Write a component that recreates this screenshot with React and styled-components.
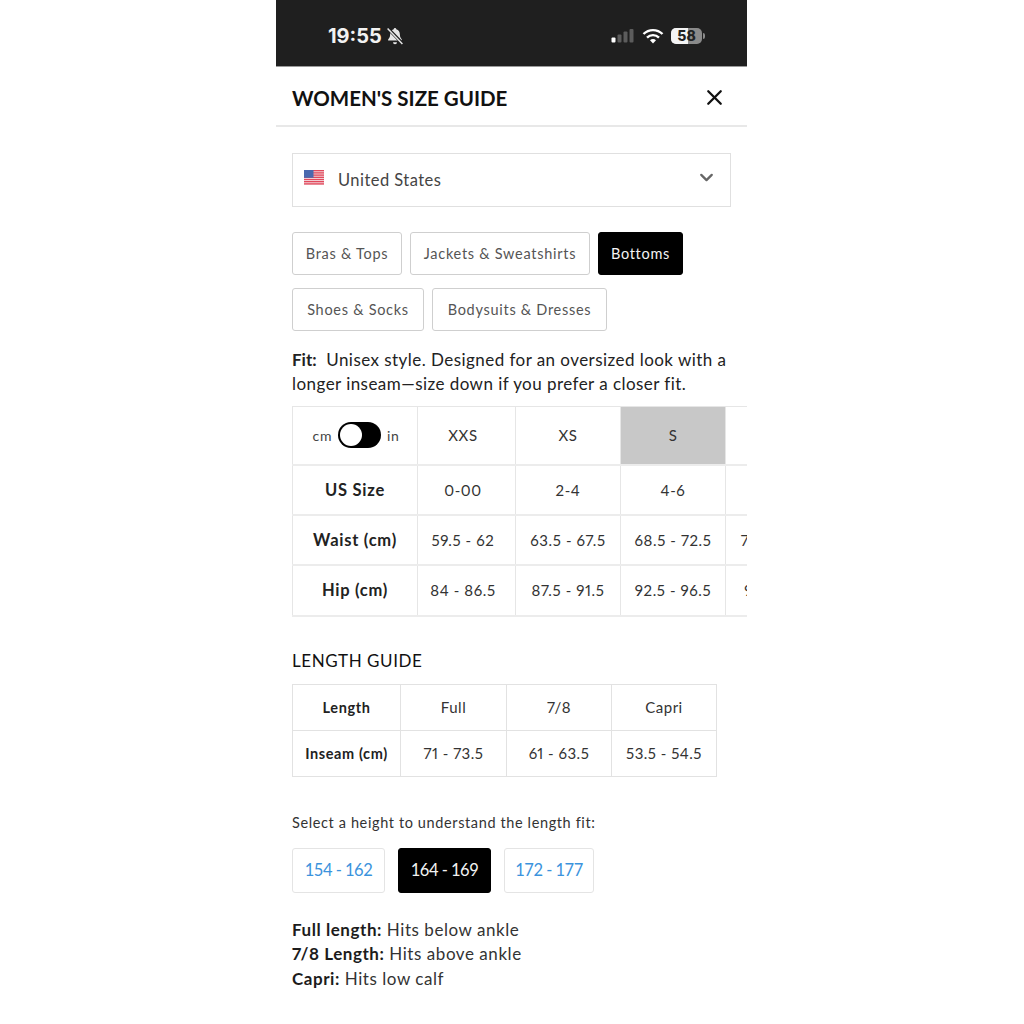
import styled, { createGlobalStyle } from "styled-components";
import { ChevronDown, X } from "lucide-react";

const GlobalStyle = createGlobalStyle`
  html, body {
    margin: 0;
    padding: 0;
    background: #fff;
  }
  body {
    font-family: "Lato", "Open Sans", sans-serif;
    font-variant-numeric: proportional-nums;
    color: #1c1c1c;
  }
`;

const categories = [
  [
    { label: "Bras & Tops", width: 110 },
    { label: "Jackets & Sweatshirts", width: 180 },
    { label: "Bottoms", width: 85, active: true },
  ],
  [
    { label: "Shoes & Socks", width: 132 },
    { label: "Bodysuits & Dresses", width: 175 },
  ],
];

const sizeRows = [
  { label: "US Size", height: 50, values: ["0-00", "2-4", "4-6", ""] },
  { label: "Waist (cm)", height: 50, values: ["59.5 - 62", "63.5 - 67.5", "68.5 - 72.5", "73.5 - 77.5"] },
  { label: "Hip (cm)", height: 51, values: ["84 - 86.5", "87.5 - 91.5", "92.5 - 96.5", "97.5 - 101"] },
];

const heights = [
  { label: "154 - 162", width: 93 },
  { label: "164 - 169", width: 93, active: true },
  { label: "172 - 177", width: 90 },
];

const StatusIcons = () => (
  <StatusRight>
    <svg width="24" height="16" viewBox="0 0 24 16">
      <rect x="0.5" y="9.5" width="4" height="5" rx="1" fill="#fff" />
      <rect x="6.5" y="6.5" width="4" height="8" rx="1" fill="#5c5c5c" />
      <rect x="12.5" y="3.5" width="4" height="11" rx="1" fill="#5c5c5c" />
      <rect x="18.5" y="1" width="4" height="13.5" rx="1" fill="#5c5c5c" />
    </svg>
    <svg width="22" height="16" viewBox="0 0 22 16" fill="none" stroke="#fff" strokeWidth="2.4">
      <path d="M1.5 6a13.5 13.5 0 0 1 19 0" />
      <path d="M5 9.6a8.6 8.6 0 0 1 12 0" />
      <path d="M11 15.5l-3-3.2a4.2 4.2 0 0 1 6 0z" fill="#fff" stroke="none" />
    </svg>
    <Battery>
      <BatteryLevel />
      <BatteryText>58</BatteryText>
      <BatteryCap />
    </Battery>
  </StatusRight>
);

const MutedBell = () => (
  <svg width="18" height="18" viewBox="0 0 17 17">
    <path d="M8.5 1a1.2 1.2 0 0 1 1.2 1.2c2.4.6 3.4 2.6 3.4 5 0 2.6 1 3.6 1.9 4.6v1H2v-1c.9-1 1.9-2 1.9-4.6 0-2.4 1-4.4 3.4-5A1.2 1.2 0 0 1 8.5 1z" fill="#e6e6e6" />
    <path d="M6.6 14.4h3.8a1.9 1.9 0 0 1-3.8 0z" fill="#e6e6e6" />
    <path d="M2 1.5l13.5 14" stroke="#1f1f1f" strokeWidth="3" />
    <path d="M1.5 1.5l14 14.5" stroke="#e6e6e6" strokeWidth="1.4" />
  </svg>
);

const UsFlag = () => (
  <svg width="20" height="15" viewBox="0 0 20 15">
    <rect width="20" height="15" rx="1" fill="#f6eef0" />
    {[0, 2.2, 4.4, 6.6, 8.8, 11, 13.2].map((y) => (
      <rect key={y} y={y} width="20" height="1.4" fill="#e2495c" />
    ))}
    <rect width="9.5" height="7.8" fill="#4a68ae" />
  </svg>
);

export default function App() {
  return (
    <>
      <GlobalStyle />
      <Phone>
        <StatusBar>
          <StatusLeft>
            <Clock>19:55</Clock>
            <MutedBell />
          </StatusLeft>
          <StatusIcons />
        </StatusBar>

        <Header>
          <Title>WOMEN'S SIZE GUIDE</Title>
          <X size={25} strokeWidth={2.2} color="#111" />
        </Header>

        <Content>
          <CountrySelect>
            <UsFlag />
            <CountryName>United States</CountryName>
            <ChevronDown size={21} strokeWidth={2.6} color="#666" />
          </CountrySelect>

          <CategoryGroup>
            {categories.map((row, i) => (
              <CategoryRow key={i}>
                {row.map((c) => (
                  <CategoryButton key={c.label} $active={c.active} $width={c.width}>
                    {c.label}
                  </CategoryButton>
                ))}
              </CategoryRow>
            ))}
          </CategoryGroup>

          <FitText>
            <strong>Fit:</strong>&nbsp; Unisex style. Designed for an oversized look with a
            longer inseam—size down if you prefer a closer fit.
          </FitText>

          <SizeTableWrap>
            <SizeTable>
              <colgroup>
                <col width="125" />
                <col width="98" />
                <col width="105" />
                <col width="105" />
                <col width="105" />
              </colgroup>
              <tbody>
                <SizeRow $height={58}>
                  <SizeCell>
                    <UnitToggle>
                      cm
                      <Toggle>
                        <Knob />
                      </Toggle>
                      in
                    </UnitToggle>
                  </SizeCell>
                  <SizeCell>XXS</SizeCell>
                  <SizeCell>XS</SizeCell>
                  <SizeCell $selected>S</SizeCell>
                  <SizeCell>M</SizeCell>
                </SizeRow>
                {sizeRows.map((row) => (
                  <SizeRow key={row.label} $height={row.height}>
                    <SizeLabel>{row.label}</SizeLabel>
                    {row.values.map((v, i) => (
                      <SizeCell key={i}>{v}</SizeCell>
                    ))}
                  </SizeRow>
                ))}
              </tbody>
            </SizeTable>
          </SizeTableWrap>

          <SectionTitle>LENGTH GUIDE</SectionTitle>

          <LengthTable>
            <colgroup>
              <col width="108" />
              <col width="106" />
              <col width="105" />
              <col width="105" />
            </colgroup>
            <tbody>
              <tr>
                <LengthLabel>Length</LengthLabel>
                <LengthCell>Full</LengthCell>
                <LengthCell>7/8</LengthCell>
                <LengthCell>Capri</LengthCell>
              </tr>
              <tr>
                <LengthLabel>Inseam (cm)</LengthLabel>
                <LengthCell>71 - 73.5</LengthCell>
                <LengthCell>61 - 63.5</LengthCell>
                <LengthCell>53.5 - 54.5</LengthCell>
              </tr>
            </tbody>
          </LengthTable>

          <HeightPrompt>Select a height to understand the length fit:</HeightPrompt>

          <HeightRow>
            {heights.map((h) => (
              <HeightButton key={h.label} $active={h.active} $width={h.width}>
                {h.label}
              </HeightButton>
            ))}
          </HeightRow>

          <FitList>
            <FitLine><strong>Full length:</strong> Hits below ankle</FitLine>
            <FitLine><strong>7/8 Length:</strong> Hits above ankle</FitLine>
            <FitLine><strong>Capri:</strong> Hits low calf</FitLine>
          </FitList>
        </Content>
      </Phone>
    </>
  );
}

const Phone = styled.main`
  width: 471px;
  margin-left: 276px;
  background: #fff;
`;

const StatusBar = styled.div`
  height: 67px;
  background: #1f1f1f;
  border-bottom: 1px solid #9a9a9a;
  box-sizing: border-box;
  display: flex;
  align-items: center;
  justify-content: space-between;
  padding: 5px 45px 0 52px;
`;

const StatusLeft = styled.div`
  display: flex;
  align-items: center;
  gap: 4px;
`;

const Clock = styled.span`
  font-family: "Inter", sans-serif;
  font-size: 20px;
  font-weight: 700;
  color: #f2f2f2;
`;

const StatusRight = styled.div`
  display: flex;
  align-items: center;
  gap: 7px;
`;

const Battery = styled.div`
  position: relative;
  width: 31px;
  height: 16px;
  border-radius: 5px;
  background: #8a8a8a;
  display: flex;
  align-items: center;
  justify-content: center;
`;

const BatteryLevel = styled.div`
  position: absolute;
  inset: 0 14px 0 0;
  background: #f4f4f4;
  border-radius: 5px 0 0 5px;
`;

const BatteryText = styled.span`
  position: relative;
  font-family: "Inter", sans-serif;
  font-size: 14px;
  font-weight: 800;
  color: #222;
`;

const BatteryCap = styled.div`
  position: absolute;
  right: -3px;
  top: 5px;
  width: 2px;
  height: 6px;
  border-radius: 0 2px 2px 0;
  background: #8a8a8a;
`;

const Header = styled.header`
  height: 60px;
  box-sizing: border-box;
  border-bottom: 2px solid #e8e8e8;
  display: flex;
  align-items: center;
  justify-content: space-between;
  padding: 3px 20px 0 16px;
`;

const Title = styled.h1`
  margin: 0;
  font-size: 20.5px;
  font-weight: 700;
  color: #111;
`;

const Content = styled.div`
  padding: 26px 16px 0;
  display: flex;
  flex-direction: column;
  align-items: flex-start;
`;

const CountrySelect = styled.div`
  width: 439px;
  height: 54px;
  box-sizing: border-box;
  border: 1px solid #e0e0e0;
  display: flex;
  align-items: center;
  padding: 0 13px 5px 11px;
`;

const CountryName = styled.span`
  flex: 1;
  margin: 5px 0 0 14px;
  font-size: 16.5px;
  letter-spacing: 0.45px;
  color: #444;
`;

const CategoryGroup = styled.div`
  margin-top: 25px;
  display: flex;
  flex-direction: column;
  gap: 13px;
`;

const CategoryRow = styled.div`
  display: flex;
  gap: 8px;
`;

const CategoryButton = styled.button`
  width: ${(p) => p.$width}px;
  height: 43px;
  padding: 0;
  border-radius: 3px;
  border: 1px solid ${(p) => (p.$active ? "#000" : "#cfcfcf")};
  background: ${(p) => (p.$active ? "#000" : "#fff")};
  color: ${(p) => (p.$active ? "#f4f4f4" : "#555")};
  font-family: inherit;
  font-size: 14.5px;
  letter-spacing: 0.72px;
`;

const FitText = styled.p`
  margin: 17px 0 0;
  width: 439px;
  font-size: 17px;
  line-height: 24px;
  letter-spacing: 0.45px;
  color: #222;
  strong {
    font-weight: 700;
    letter-spacing: 0;
  }
`;

const SizeTableWrap = styled.div`
  margin-top: 10px;
  width: 455px;
  overflow: hidden;
`;

const SizeTable = styled.table`
  width: 538px;
  table-layout: fixed;
  border-collapse: collapse;
  border-top: 1px solid #e6e6e6;
  border-left: 1px solid #e6e6e6;
  td:nth-child(2) {
    padding-right: 7px;
  }
`;

const SizeRow = styled.tr`
  height: ${(p) => p.$height}px;
`;

const SizeCell = styled.td`
  padding: 0;
  text-align: center;
  border-right: 1px solid #e6e6e6;
  border-bottom: 2px solid #ececec;
  background: ${(p) => (p.$selected ? "#c8c8c8" : "#fff")};
  font-size: 15px;
  letter-spacing: 0.6px;
  color: #333;
`;

const SizeLabel = styled(SizeCell).attrs({ as: "th" })`
  font-size: 16.5px;
  font-weight: 700;
  letter-spacing: 0.75px;
  color: #222;
`;

const UnitToggle = styled.div`
  display: flex;
  align-items: center;
  justify-content: center;
  gap: 6px;
  padding-left: 2px;
  font-size: 14px;
  color: #444;
`;

const Toggle = styled.div`
  width: 43px;
  height: 26px;
  box-sizing: border-box;
  border-radius: 13px;
  background: #000;
  padding: 2px;
`;

const Knob = styled.div`
  width: 22px;
  height: 22px;
  border-radius: 50%;
  background: #fff;
`;

const SectionTitle = styled.h2`
  margin: 33px 0 0;
  font-size: 17px;
  font-weight: 400;
  letter-spacing: 0.55px;
  color: #111;
`;

const LengthTable = styled.table`
  margin-top: 13px;
  width: 425px;
  table-layout: fixed;
  border-collapse: collapse;
`;

const LengthCell = styled.td`
  height: 45px;
  padding: 0;
  text-align: center;
  border: 1px solid #e2e2e2;
  font-size: 15px;
  letter-spacing: 0.5px;
  color: #333;
`;

const LengthLabel = styled(LengthCell).attrs({ as: "th" })`
  font-size: 14.5px;
  font-weight: 700;
  letter-spacing: 0.6px;
  color: #222;
`;

const HeightPrompt = styled.p`
  margin: 37px 0 0;
  font-size: 14.5px;
  letter-spacing: 0.62px;
  color: #333;
`;

const HeightRow = styled.div`
  margin-top: 17px;
  display: flex;
  gap: 13px;
`;

const HeightButton = styled.button`
  width: ${(p) => p.$width}px;
  height: 45px;
  padding: 0;
  border-radius: 3px;
  border: 1px solid ${(p) => (p.$active ? "#000" : "#e4e4e4")};
  background: ${(p) => (p.$active ? "#000" : "#fff")};
  color: ${(p) => (p.$active ? "#f2f2f2" : "#3b93dd")};
  font-family: inherit;
  font-size: 16.5px;
  letter-spacing: -0.5px;
`;

const FitList = styled.div`
  margin-top: 25px;
`;

const FitLine = styled.div`
  font-size: 17px;
  line-height: 24.5px;
  letter-spacing: 0.55px;
  color: #333;
  strong {
    font-weight: 700;
    color: #1c1c1c;
  }
`;
